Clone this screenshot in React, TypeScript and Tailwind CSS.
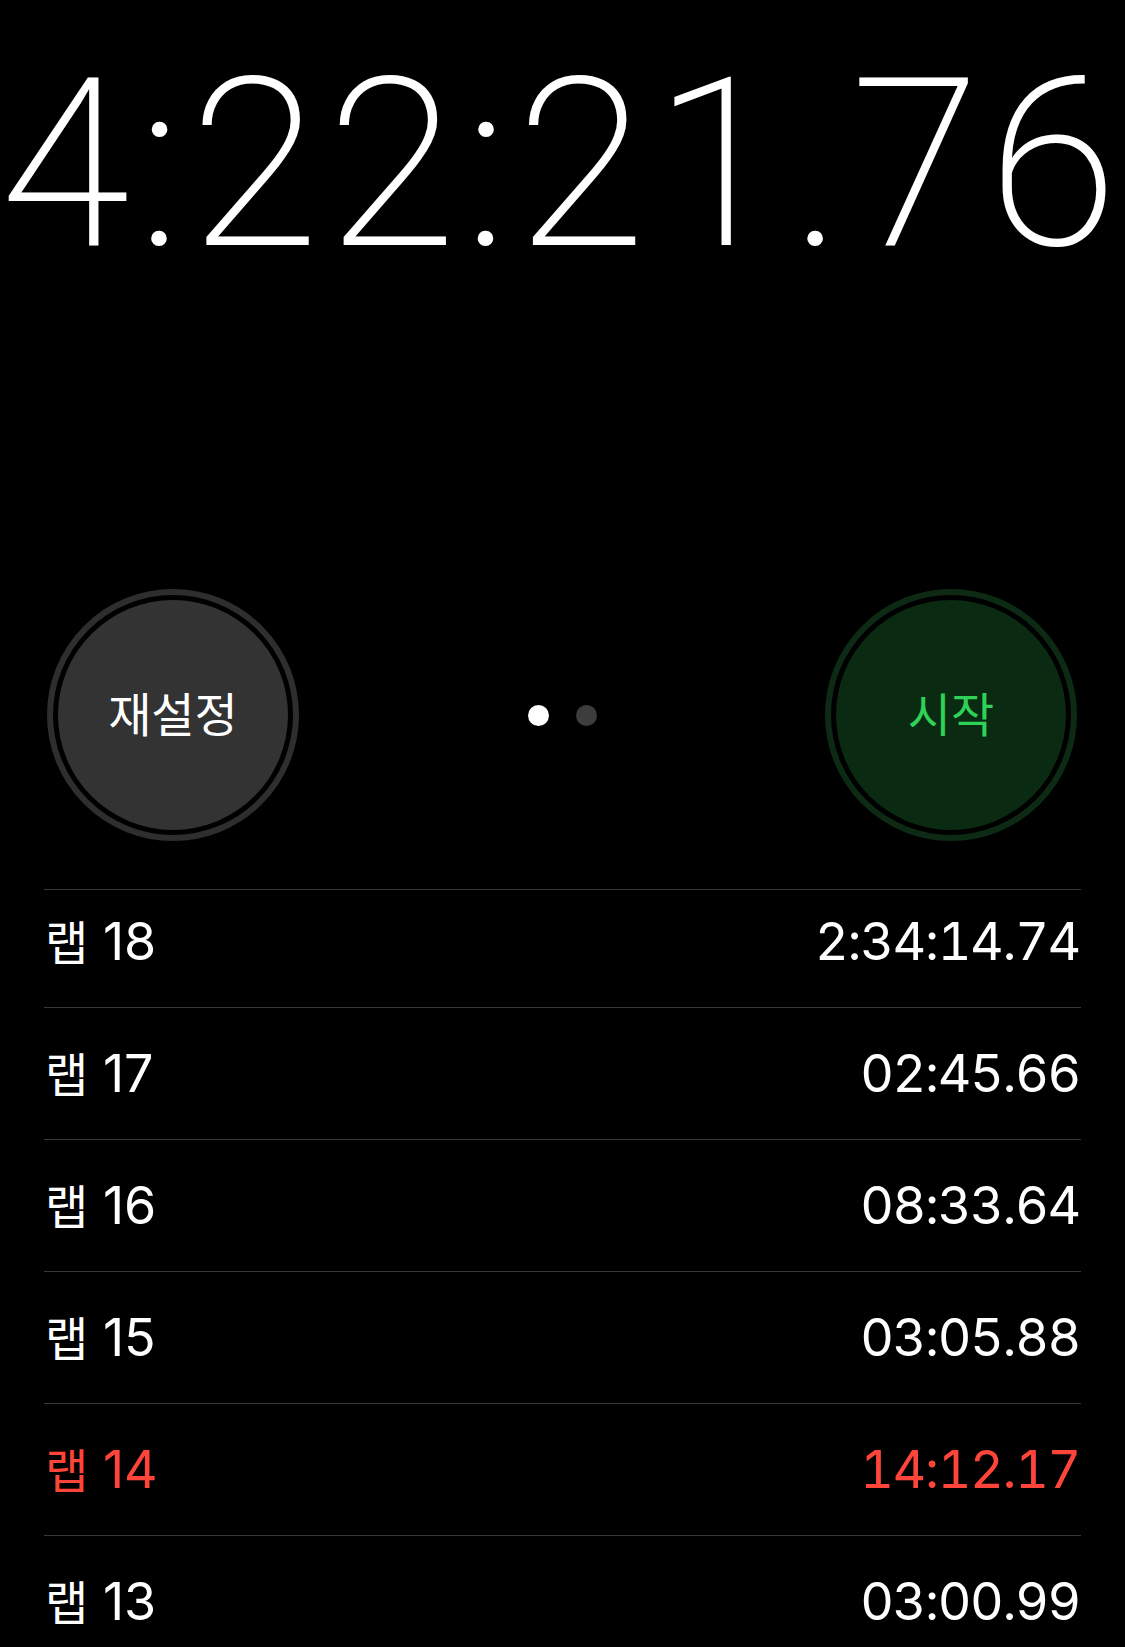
import React from 'react'

const laps = [
  { num: '18', time: '2:34:14.74', red: false },
  { num: '17', time: '02:45.66', red: false },
  { num: '16', time: '08:33.64', red: false },
  { num: '15', time: '03:05.88', red: false },
  { num: '14', time: '14:12.17', red: true },
  { num: '13', time: '03:00.99', red: false }
]

const font = { fontFamily: 'Inter, "Noto Sans CJK KR", sans-serif' }

function RoundButton({ label, ring, fill, text }: { label: string; ring: string; fill: string; text: string }) {
  return (
    <div className={`w-[252px] h-[252px] shrink-0 rounded-full border-[6px] p-[5px] ${ring}`}>
      <div className={`w-full h-full rounded-full flex items-center justify-center pb-[8px] ${fill}`}>
        <span className={`text-[47px] leading-none ${text}`} style={{ fontFamily: '"Noto Sans CJK KR", sans-serif' }}>
          {label}
        </span>
      </div>
    </div>
  )
}

export default function App() {
  return (
    <div className="w-[1125px] h-[1647px] bg-black overflow-hidden flex flex-col text-white" style={font}>
      {/* big clock */}
      <div className="h-[589px] shrink-0 pt-[47px]">
        <div
          className="w-full text-center text-[236px] font-extralight leading-none tracking-[7.3px] whitespace-nowrap"
          style={{ fontFamily: 'Roboto, sans-serif' }}
        >
          4:22:21.76
        </div>
      </div>

      {/* buttons */}
      <div className="h-[252px] shrink-0 flex items-center justify-between pl-[47px] pr-[48px]">
        <RoundButton label="재설정" ring="border-[#2e2e2e]" fill="bg-[#333333]" text="text-white" />
        <div className="flex items-center gap-[27px]">
          <div className="w-[21px] h-[21px] rounded-full bg-white" />
          <div className="w-[21px] h-[21px] rounded-full bg-[#3d3d3d]" />
        </div>
        <RoundButton label="시작" ring="border-[#0c2a14]" fill="bg-[#0a2a12]" text="text-[#30d158]" />
      </div>

      {/* laps */}
      <div className="mt-[48px] mx-[44px] shrink-0 border-t border-[#38383a]">
        {laps.map((lap, i) => (
          <div
            key={lap.num}
            className={`flex items-center justify-between border-b border-[#38383a] pl-[1px] pr-[1px] text-[52px] leading-none ${
              i === 0 ? 'h-[118px] pb-[13px]' : 'h-[132px]'
            } ${lap.red ? 'text-[#ff453a]' : 'text-white'}`}
          >
            <span>
              <span className="text-[47px]">랩</span> {lap.num}
            </span>
            <span className="tabular-nums tracking-[-1.3px]">{lap.time}</span>
          </div>
        ))}
      </div>
    </div>
  )
}
